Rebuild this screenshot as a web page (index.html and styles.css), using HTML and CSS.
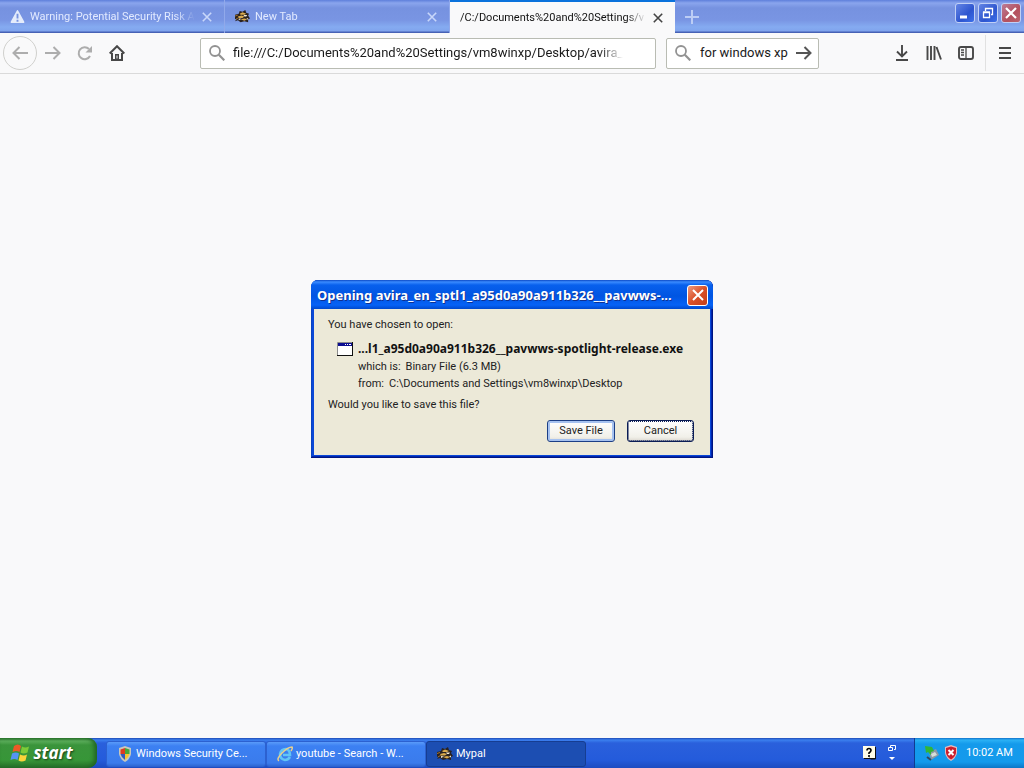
FILE: index.html
```html
<!DOCTYPE html>
<html lang="en">
<head>
<meta charset="utf-8">
<title>Mypal</title>
<link rel="stylesheet" href="styles.css">
</head>
<body>
<svg class="defs" aria-hidden="true">
  <defs>
    <symbol id="cat" viewBox="0 0 16 14">
      <path d="M0 5l4-1 1-3 3 1 3-2 1 3 3 1-1 2 2 3-2 1v3l-4-1-4 1-3-2-3 1 2-3-2 1z" fill="#2a2220"/>
      <path d="M5 4l3-1.500 4 1.500-2 1H6zM3 7l4-1 3 1-2 1.500H4zM6 10l4-1 3 1-3 1.500z" fill="#d9aa4e"/>
      <path d="M9 5.500h4L12 7h-2zM4 9l3 .5L4 11zM12 9.500l2-1v2z" fill="#f4ead0"/>
      <path d="M0 6.500l3-1M1 10l3-2" stroke="#a5742f" fill="none"/>
    </symbol>
    <symbol id="search" viewBox="0 0 16 16">
      <circle cx="6" cy="6" r="5" fill="none" stroke="#929292" stroke-width="1.8"/>
      <path d="M9.8 9.8l5.500 5.500" stroke="#929292" stroke-width="2.2"/>
    </symbol>
    <symbol id="x" viewBox="0 0 10 10">
      <path d="M.8.8l8.400 8.400M9.200.8L.8 9.200" fill="none" stroke="currentColor" stroke-width="1.6"/>
    </symbol>
    <symbol id="arrow" viewBox="0 0 16 14">
      <path d="M0 7h14.500M8.500 1l6 6-6 6" fill="none" stroke="currentColor" stroke-width="2"/>
    </symbol>
  </defs>
</svg>
<div class="screen">
  <header class="tabbar">
    <div class="tab">
      <svg class="tab-icon" viewBox="0 0 16 16"><path d="M7 2q1-2 2 0l6 11q1 2-1 2H2q-2 0-1-2z" fill="#e4ecfb"/><path d="M8 5v5M8 11.500v2" stroke="#7592e0" stroke-width="2"/></svg>
      <span class="tab-title">Warning: Potential Security Risk A</span>
      <button class="tab-close" aria-label="Close tab"><svg><use href="#x"/></svg></button>
    </div>
    <div class="tab">
      <svg class="tab-icon"><use href="#cat"/></svg>
      <span class="tab-title">New Tab</span>
      <button class="tab-close" aria-label="Close tab"><svg><use href="#x"/></svg></button>
    </div>
    <div class="tab tab-active">
      <span class="tab-title">/C:/Documents%20and%20Settings/v</span>
      <button class="tab-close" aria-label="Close tab"><svg><use href="#x"/></svg></button>
    </div>
    <button class="new-tab" aria-label="New tab"><svg viewBox="0 0 14 14"><path d="M7 0v14M0 7h14" stroke="#bccdf5" stroke-width="2"/></svg></button>
    <div class="window-buttons">
      <button class="caption" aria-label="Minimize"><svg viewBox="0 0 18 18"><path d="M4 13h7" stroke="#fff" stroke-width="3"/></svg></button>
      <button class="caption" aria-label="Restore"><svg viewBox="0 0 18 18"><path d="M6.500 7V4.500h7v6H12M6 4.500h8M4.500 8.500h6v5h-6zM4 8h7" fill="none" stroke="#fff" stroke-width="1.300"/></svg></button>
      <button class="caption caption-close" aria-label="Close"><svg viewBox="0 0 18 18"><path d="M4 4l10 10M14 4L4 14" stroke="#fff" stroke-width="2.200"/></svg></button>
    </div>
  </header>

  <nav class="toolbar">
    <button class="back" aria-label="Back"><svg class="flip"><use href="#arrow"/></svg></button>
    <button class="tool tool-dim" aria-label="Forward"><svg><use href="#arrow"/></svg></button>
    <button class="tool tool-dim" aria-label="Reload"><svg viewBox="0 0 16 16"><path d="M13 11A6 6 0 1 1 12 4" fill="none" stroke="currentColor" stroke-width="2"/><path d="M15 1v6.500H8.500z" fill="currentColor"/></svg></button>
    <button class="tool" aria-label="Home"><svg viewBox="0 0 16 16"><path d="M.7 8.500L8 1.200l7.300 7.300M3 8v7h10V8" fill="none" stroke="currentColor" stroke-width="2"/><path d="M6 9h4v6H6z" fill="currentColor"/><path d="M8 10.500v3" stroke="#eee"/></svg></button>
    <label class="field address"><svg><use href="#search"/></svg><input type="text" aria-label="Address" value="file:///C:/Documents%20and%20Settings/vm8winxp/Desktop/avira_"></label>
    <label class="field search"><svg><use href="#search"/></svg><input type="text" aria-label="Search" value="for windows xp"><button class="go" aria-label="Go"><svg><use href="#arrow"/></svg></button></label>
    <div class="tools">
      <button class="tool" aria-label="Downloads"><svg viewBox="0 0 16 16"><path d="M8 0v11M3 6.500l5 5 5-5M2 15h12" fill="none" stroke="currentColor" stroke-width="1.900"/></svg></button>
      <button class="tool" aria-label="Library"><svg viewBox="0 0 16 16"><path d="M1.500 1v14M5 1v14M8.500 1v14M10.500 2L15 14.500" fill="none" stroke="currentColor" stroke-width="1.900"/></svg></button>
      <button class="tool" aria-label="Sidebar"><svg viewBox="0 0 16 16"><rect x="1" y="2" width="14" height="12" rx="2" fill="none" stroke="currentColor" stroke-width="1.900"/><path d="M8 2v12M3 5h3M3 7.500h3M3 10h3" stroke="currentColor" stroke-width="1.300"/></svg></button>
      <button class="tool menu" aria-label="Menu"><svg viewBox="0 0 16 16"><path d="M2 3h12M2 8h12M2 13h12" stroke="currentColor" stroke-width="1.900"/></svg></button>
    </div>
  </nav>

  <main class="page">
    <section class="dialog" role="dialog" aria-labelledby="dialog-title">
      <header class="dialog-bar">
        <h1 id="dialog-title">Opening avira_en_sptl1_a95d0a90a911b326__pavwws-...</h1>
        <button class="dialog-close" aria-label="Close"><svg viewBox="0 0 18 18"><path d="M4 4l10 10M14 4L4 14" stroke="#fff" stroke-width="2"/></svg></button>
      </header>
      <div class="dialog-body">
        <p>You have chosen to open:</p>
        <div class="file">
          <svg class="file-icon" viewBox="0 0 16 14"><path d="M.5.5h15v13H.5z" fill="#fff" stroke="#8c8c8c"/><path d="M0 13.500h16M15.500 0v14" stroke="#111"/><path d="M1 1h14v3H1z" fill="#0b0d91"/><path d="M8 2.500h1M10 2.500h1M12 2.500h2" stroke="#fff"/></svg>
          <div class="facts">
            <strong>...l1_a95d0a90a911b326__pavwws-spotlight-release.exe</strong>
            <div class="fact"><span>which is:</span><span>Binary File (6.3 MB)</span></div>
            <div class="fact"><span>from:</span><span>C:\Documents and Settings\vm8winxp\Desktop</span></div>
          </div>
        </div>
        <p>Would you like to save this file?</p>
        <div class="actions">
          <button class="xp-button">Save File</button>
          <button class="xp-button xp-focused">Cancel</button>
        </div>
      </div>
    </section>
  </main>

  <footer class="taskbar">
    <button class="start"><svg viewBox="0 0 20 18"><path d="M4 2q4-3 7 0L9.500 8q-3-2-7 0z" fill="#ee5a26"/><path d="M12 2.500q3 2 7 0L17.500 8.500q-4 2-7 0z" fill="#7ccb38"/><path d="M2 9.500q4-2 7 0L7.500 16q-3-2-7 0z" fill="#5494f4"/><path d="M10 10.500q4 2 7 0L15.500 16.500q-4 2-7 0z" fill="#fbd43a"/></svg>start</button>
    <div class="tasks">
      <button class="task"><svg viewBox="0 0 16 16"><path d="M8 0l6 2v6q-1 5-6 8-5-3-6-8V2z" fill="#c8c8bb"/><path d="M8 2v6H3.500V3.500z" fill="#dd3c20"/><path d="M8 2l4.500 1.500V8H8z" fill="#46a83a"/><path d="M3.500 8H8v6Q4 11 3.500 8z" fill="#3159bf"/><path d="M8 8h4.500Q12 11 8 14z" fill="#f6c62e"/></svg><span>Windows Security Ce...</span></button>
      <button class="task"><svg viewBox="0 0 16 16"><path d="M13 11q-2 3-5 3-5-1-5-6 1-5 6-5 4 1 4 6H6" fill="none" stroke="#62c6f5" stroke-width="2.600"/><path d="M2 15q-3-2 3-8T15 1q1 1-1 4" fill="none" stroke="#e7cf8f" stroke-width="1.500"/></svg><span>youtube - Search - W...</span></button>
      <button class="task task-active"><svg><use href="#cat"/></svg><span>Mypal</span></button>
    </div>
    <button class="bar-icon help" aria-label="Help"><svg viewBox="0 0 14 14"><path d="M0 0h12v12H0z" fill="#fffde9"/><path d="M12.500 1v12H8l-2-1M1 12.500h11" stroke="#111" fill="none"/><path d="M4 4.500q0-2 2-2t2 2q0 1-2 2.500v1M6 9v2" stroke="#000" stroke-width="1.600" fill="none"/></svg></button>
    <button class="bar-icon lang" aria-label="Language bar options"><svg viewBox="0 0 10 18"><path d="M3.500 3V1.500h5v4H7M1.500 3.500h4v3h-4z" fill="none" stroke="#fff"/><path d="M2 13h6l-3 3z" fill="#fff"/></svg></button>
    <div class="tray">
      <svg viewBox="0 0 16 16"><path d="M5 7l7-3 3 6-8 5z" fill="#8d99a5"/><path d="M7 9l4-2 2 3-5 2z" fill="#d8dfd8"/><path d="M1 1l7 1 2 4-3 1v3L4 7 2 8z" fill="#32b635"/><path d="M3 12l4 3" stroke="#324759" stroke-width="2"/></svg>
      <svg viewBox="0 0 16 16"><path d="M8 0l6 2v6q-1 5-6 8-5-3-6-8V2z" fill="#e6b9bd"/><path d="M8 1.500l5 1.500v5q-1 4-5 6.500Q4 12 3 8V3z" fill="#cb1f2c"/><path d="M5.500 5l5 5M10.500 5l-5 5" stroke="#fff" stroke-width="2"/></svg>
      <time>10:02 AM</time>
    </div>
  </footer>
</div>
</body>
</html>
```
FILE: styles.css
```css
* { box-sizing: border-box; }
body {
  margin: 0;
  font-family: Roboto, "Noto Sans", sans-serif;
  font-size: 11px;
  line-height: 16px;
  color: #222;
}
button { border: 0; padding: 0; background: none; font: inherit; color: inherit; display: flex; align-items: center; justify-content: center; flex: none; }
input { font: inherit; color: inherit; border: 0; padding: 0; background: none; width: 0; min-width: 0; flex: 1; outline: 0; }
svg { display: block; flex: none; }
h1, p { margin: 0; }
.defs { position: absolute; width: 0; height: 0; }
.screen { min-height: 100vh; display: flex; flex-direction: column; background: #f9f9fa; }

.tabbar {
  display: flex;
  height: 33px;
  background: linear-gradient(#5e7fdb 0, #8aa5ed 3px, #7692e0 8px, #7995e3 20px, #85abf1 27px, #80a4ed 31px, #4762b5 32px);
}
.tab {
  display: flex;
  align-items: center;
  flex: 0 1 225px;
  min-width: 0;
  padding: 0 12px 0 10px;
  border-right: 1px solid #91a9ea;
  color: #e2eaff;
}
.tab-icon { width: 15px; height: 15px; margin-right: 5px; }
.tab-title { flex: 1; overflow: hidden; white-space: nowrap; mask-image: linear-gradient(to right, #000 calc(100% - 20px), transparent); }
.tab-close { width: 24px; height: 24px; margin-right: -7px; color: #c8d7fa; }
.tab-close svg { width: 10px; height: 10px; }
.tab-active { background: #f9f9fa; border-top: 2px solid #0a72dc; border-right: 0; color: #111; }
.tab-active .tab-close { color: #444; }
.new-tab { width: 34px; }
.new-tab svg { width: 14px; height: 14px; }
.window-buttons { display: flex; gap: 3px; padding: 3px 3px 0 0; margin-left: auto; }
.caption { width: 20px; height: 20px; border: 1px solid #c0d0f6; border-radius: 3px; background: linear-gradient(135deg, #6485e5, #2d55cf 60%, #3c70ea); }
.caption svg { width: 18px; height: 18px; }
.caption-close { background: linear-gradient(135deg, #bc7c96, #b4505d 60%, #bb6570); }

.toolbar { display: flex; align-items: center; height: 41px; padding-left: 3px; border-bottom: 1px solid #dadada; color: #484848; }
.back { width: 34px; height: 34px; border: 1px solid #d0d0cd; border-radius: 50%; color: #adadad; }
.back svg, .tool svg { width: 16px; height: 16px; }
.flip { transform: scaleX(-1); }
.tool { width: 32px; height: 32px; }
.tool-dim { color: #adadad; }
.field { display: flex; align-items: center; min-width: 0; height: 31px; border: 1px solid #b9bcb3; border-radius: 2px; background: #fff; padding: 0 8px; gap: 8px; font-size: 13px; color: #1a1a1a; }
.field svg { width: 16px; height: 16px; }
.address { flex: 1 1 456px; margin-left: 67px; padding-right: 32px; }
.address input { mask-image: linear-gradient(to right, #000 calc(100% - 24px), transparent); }
.search { flex: 0 1 153px; margin-left: 10px; padding-right: 6px; gap: 9px; }
.go { color: #555; margin-left: -8px; }
.tools { display: flex; align-items: center; margin-left: 67px; }
.menu { width: 39px; height: 36px; margin-left: 3px; border-left: 1px solid #e1e1e1; }

.page { flex: 1; display: flex; justify-content: center; align-items: flex-start; padding-top: 206px; }
.dialog { width: 402px; padding: 0 3px 3px; border-radius: 7px 7px 0 0; background: #0a48d8; box-shadow: inset -1px -1px #001580, inset 1px 1px #0842c0, inset -2px -2px #0025ad; }
.dialog-bar { display: flex; align-items: center; height: 29px; margin: 0 -3px; padding: 1px 5px 0 6px; border-radius: 7px 7px 0 0; background: linear-gradient(#0c49c5 0, #3a8bff 2px, #0860ed 5px, #0055e2 16px, #0662f6 25px, #0048cd); color: #fff; }
.dialog-bar h1 { flex: 1; font: bold 13px/20px "Noto Sans", sans-serif; text-shadow: 1px 1px #10308f; white-space: nowrap; }
.dialog-close { width: 21px; height: 21px; border: 1px solid #fff; border-radius: 3px; background: linear-gradient(135deg, #ef9a7e, #da5028 50%, #c43e1b); }
.dialog-close svg { width: 18px; height: 18px; }
.dialog-body { background: #ece9d8; padding: 8px 16px 13px 14px; }
.file { display: flex; gap: 5px; padding: 7px 0 5px 9px; }
.file-icon { width: 16px; height: 14px; margin-top: 2px; }
.facts { display: grid; gap: 1px; white-space: nowrap; }
.facts strong { font: bold 12px/18px "Noto Sans", sans-serif; color: #111; }
.fact { display: flex; gap: 5px; }
.actions { display: flex; justify-content: flex-end; gap: 12px; padding-top: 7px; }
.xp-button { width: 68px; height: 22px; border: 1px solid #1c3f86; border-radius: 3px; background: linear-gradient(#fff, #f1f0e9 80%, #dcd8d0); box-shadow: inset 0 0 0 2px #a6c2f0; }
.xp-focused { width: 67px; border-color: #0b1d55; box-shadow: none; outline: 1px dotted #0b1d55; outline-offset: -2px; }

.taskbar { display: flex; height: 30px; background: linear-gradient(#1f4bb5 0, #3b80ef 2px, #2a60dc 5px, #245bdb 22px, #1d4bc0); color: #fff; }
.start { width: 97px; padding-right: 14px; gap: 3px; border-radius: 0 9px 9px 0; background: linear-gradient(#2f7c31 0, #5cae5c 3px, #3a943b 7px, #379638 22px, #266f29); box-shadow: inset -3px 0 4px #216624; font: italic bold 17px/28px "Open Sans", sans-serif; text-shadow: 1px 1px 2px #163d17; }
.start svg { width: 20px; height: 20px; }
.tasks { display: flex; flex: 1; min-width: 0; padding: 3px 0 0 9px; }
.task { flex: 0 1 160px; min-width: 0; height: 26px; padding: 0 10px; gap: 3px; justify-content: flex-start; border: 1px solid #2c61d0; border-radius: 3px; background: linear-gradient(#5a9bf9, #3c80f2 4px, #3a7bec 21px, #2e68d4); white-space: nowrap; }
.task svg { width: 16px; height: 16px; }
.task-active { background: #1c4eb2; border-color: #163d91; }
.bar-icon { width: 22px; }
.help svg { width: 14px; height: 14px; }
.lang svg { width: 10px; height: 18px; }
.tray { display: flex; align-items: center; gap: 3px; width: 110px; margin-left: 11px; padding-left: 9px; border-left: 1px solid #103b90; background: linear-gradient(#1271c8 0, #2bb1f5 2px, #149aeb 6px, #139aec 24px, #0c76c6); }
.tray svg { width: 16px; height: 16px; }
.tray time { margin-left: 4px; white-space: nowrap; }
```
